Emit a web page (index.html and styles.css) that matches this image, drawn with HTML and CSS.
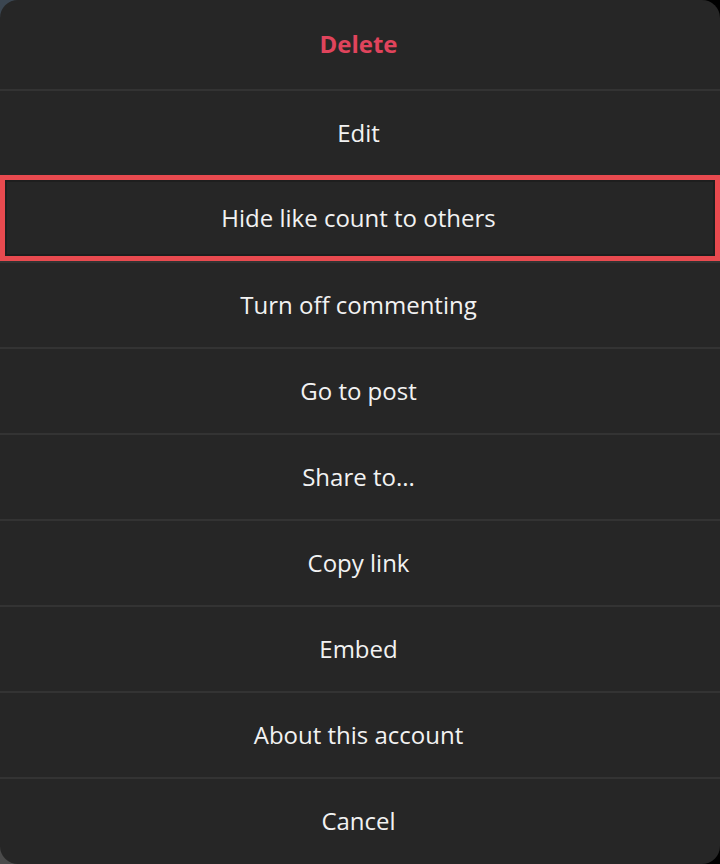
FILE: index.html
```html
<!DOCTYPE html>
<html lang="en">
<head>
<meta charset="utf-8">
<title>Post options</title>
<link rel="stylesheet" href="styles.css">
</head>
<body>
<div class="menu" role="dialog">
  <button class="item item-first danger">Delete</button>
  <button class="item">Edit</button>
  <button class="item highlighted">Hide like count to others</button>
  <button class="item">Turn off commenting</button>
  <button class="item">Go to post</button>
  <button class="item">Share to...</button>
  <button class="item">Copy link</button>
  <button class="item">Embed</button>
  <button class="item">About this account</button>
  <button class="item">Cancel</button>
</div>
</body>
</html>
```

FILE: styles.css
```css
html {
  background: conic-gradient(from 0deg at 50% 50%, #000 0deg 180deg, #4a4a4a 180deg 270deg, #3b4651 270deg 360deg);
  height: 100%;
}
body {
  margin: 0;
  height: 100%;
}
.menu {
  width: 720px;
  height: 864px;
  background: #262626;
  border-radius: 18px;
  display: flex;
  flex-direction: column;
  overflow: hidden;
}
.item {
  height: 86px;
  flex: none;
  display: flex;
  align-items: center;
  justify-content: center;
  background: transparent;
  border: 0;
  border-top: 2px solid #333333;
  margin: 0;
  padding: 0 3px 2px 0;
  color: #f2f2f2;
  font-family: "Open Sans", "Segoe UI", sans-serif;
  font-size: 24px;
  font-weight: 400;
  box-sizing: border-box;
}
.item-first {
  height: 89px;
  border-top: 0;
  border-bottom: 0;
}
.danger {
  color: #e0445c;
  font-weight: 700;
}
.highlighted {
  border: 5px solid #e84a4f;
  box-shadow: inset 0 0 0 2px #1e1e1e;
}
```
